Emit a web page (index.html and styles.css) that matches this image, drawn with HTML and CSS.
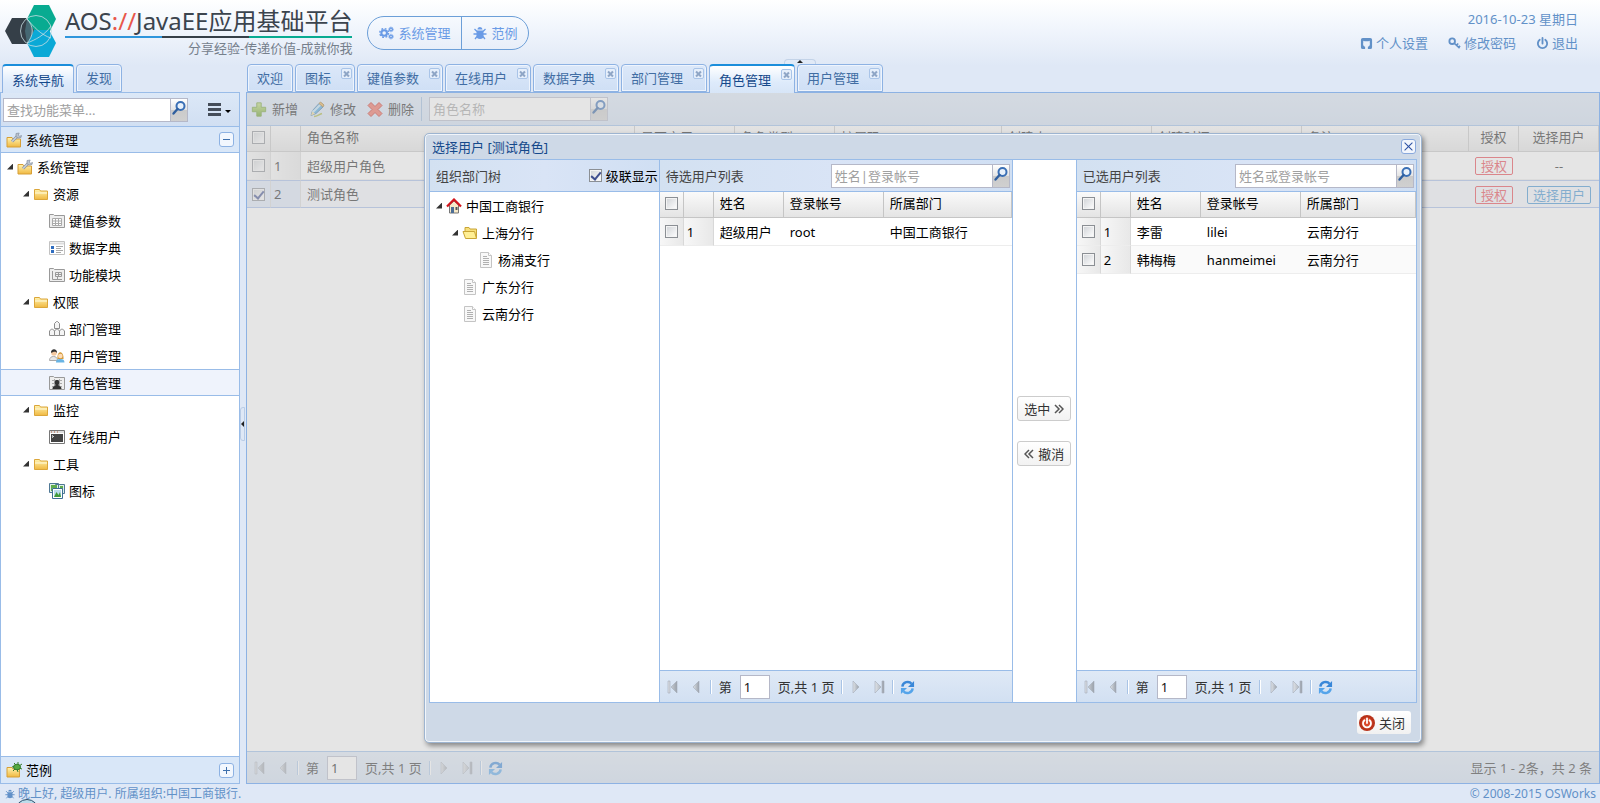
FILE: index.html
```html
<!DOCTYPE html>
<html lang="zh-CN">
<head>
<meta charset="utf-8">
<title>AOS://JavaEE应用基础平台</title>
<link rel="stylesheet" href="styles.css">
</head>
<body>
<svg class="sprite" aria-hidden="true">
  <defs>
    <linearGradient id="gold" x1="0" y1="0" x2="0" y2="1"><stop offset="0" stop-color="#fff3b0"/><stop offset="1" stop-color="#f0b840"/></linearGradient>
    <linearGradient id="leaf" x1="0" y1="0" x2="0" y2="1"><stop offset="0" stop-color="#c4e07c"/><stop offset="1" stop-color="#5f9a1c"/></linearGradient>
    <linearGradient id="silver" x1="0" y1="0" x2="1" y2="0"><stop offset="0" stop-color="#dfe3e8"/><stop offset="1" stop-color="#9aa1aa"/></linearGradient>
  </defs>
  <symbol id="i-search" viewBox="0 0 16 16"><circle cx="9.500" cy="6" r="4" fill="#e8f1fb" stroke="#3a6fb5" stroke-width="2"/><path d="M6.500 9 2.500 13.500" stroke="#2f5f9f" stroke-width="2.400" stroke-linecap="round"/></symbol>
  <symbol id="i-folder" viewBox="0 0 16 16"><path d="M1.500 13.500v-10h5l1 1.500h7v8.500z" fill="url(#gold)" stroke="#dba63a"/><path d="M2 7h12" stroke="#fffbe0"/></symbol>
  <symbol id="i-folder-open" viewBox="0 0 16 16"><path d="M3 11V2.500h4L8 4h6.500v9" fill="#f7df7b" stroke="#c9a536"/><path d="M1 6.500h11.500l2 7H3.500z" fill="#ffef95" stroke="#c9a536"/></symbol>
  <symbol id="i-folder-wrench" viewBox="0 0 16 16"><path d="M1 15V5.500h5L7 7h7.500v8z" fill="url(#gold)" stroke="#d79f36"/><path d="M6 9.500 11.500 4" stroke="#8a94a3" stroke-width="2.800"/><path d="M6 9.500 11.500 4" stroke="#cbd2dc" stroke-width="1.200"/><path d="M10 1.500v3.200L12 6l3-.5.5-2-2 .8L12.300 3l.9-2z" fill="#b9c2ce" stroke="#8590a2" stroke-width=".7"/></symbol>
  <symbol id="i-folder-bug" viewBox="0 0 16 16"><path d="M1 15V5.500h5L7 7h6.500v8z" fill="url(#gold)" stroke="#d79f36"/><path d="m6 5 3-1M8 1l2 2M12 0v3M16 2l-3 2M16 7l-3-1M12 10l-1-3M7 9l2-2" stroke="#347a2a"/><ellipse cx="11" cy="5" rx="3.500" ry="2.800" fill="#55a941" stroke="#347a2a"/></symbol>
  <symbol id="i-grid" viewBox="0 0 16 16"><path d="M.5 14.500v-13h4l1 1h10v12z" fill="#eee" stroke="#999"/><path d="M3.500 5.500h9v7h-9zM3.500 8h9M3.500 10.500h9M6.500 5.500v7M9.500 5.500v7" fill="#fff" stroke="#aaa"/></symbol>
  <symbol id="i-dict" viewBox="0 0 16 16"><path d="M.5 1.500h15v13H.5z" fill="#fff" stroke="#c2c2c2"/><path d="M1 3.500h14" stroke="#ddd" stroke-width="2"/><path d="M2 6h3v3H2zM2 10h3v3H2z" fill="#2f6dc0"/><path d="M7 6.500h7M7 8.500h5M7 10.500h7M7 12.500h5" stroke="#aaa"/></symbol>
  <symbol id="i-module" viewBox="0 0 16 16"><path d="M.5 14.500v-13h4l1 1h10v12z" fill="#eee" stroke="#999"/><path d="M3.500 4v8.500H13M6.500 5.500h6v4h-6zM9.500 5.500v4M6.500 7.500h6M8.500 9.500v3" fill="none" stroke="#999"/></symbol>
  <symbol id="i-org" viewBox="0 0 16 16" ><g fill="#f5f5f5" stroke="#8c8c8c"><path d="M5.500 7.500V2.500l2-2h1l2 2v5zM.5 14.500V10l2-2h1l2 2v4.500zM5.500 14.500V10l2-2h1l2 2v4.500zM10.500 14.500V10l2-2h1l2 2v4.500z"/></g></symbol>
  <symbol id="i-users" viewBox="0 0 16 16"><path d="M.5 12.500c0-3 2-4 4-4s4 1 4 4z" fill="#e8e8e8" stroke="#aaa"/><circle cx="5" cy="5" r="2.800" fill="#f3c8a0"/><path d="M2 5C1.500 0 8.500 0 8 5 6.500 2.800 4 3.800 2 5z" fill="#333"/><path d="M7 14.500c0-3 2-3.500 4.500-3.500s4 1 4 3.500z" fill="#68b4e4"/><path d="M8.500 11c-1-9 6.500-9 6 0z" fill="#d39a3b"/><circle cx="11.300" cy="8" r="2.300" fill="#ffdcb6"/></symbol>
  <symbol id="i-role" viewBox="0 0 16 16"><path d="M.5 14.500v-13h4l1 1h10v12z" fill="#eee" stroke="#999"/><path d="M3 5.500h10M3 8.500h10M3 11.500h10M5.500 4v9M10.500 4v9" stroke="#aaa"/><path d="M3.500 14c0-3 2.500-2.500 3-4C5 7 6 5 8 5s3 2 1.500 5c.5 1.500 3 1 3 4z" fill="#333"/></symbol>
  <symbol id="i-terminal" viewBox="0 0 16 16"><path d="M.5 1.500h15v13H.5z" fill="#fff" stroke="#777"/><path d="M1 3h14" stroke="#ddd" stroke-width="2"/><path d="M2 3h1M5 3h1M8 3h1" stroke="#b25a3a"/><path d="M2 5h12v8H2z" fill="#444"/><path d="m3 6.500 1.500 1L3 8.500" fill="none" stroke="#fff"/></symbol>
  <symbol id="i-pictures" viewBox="0 0 16 16"><g fill="#dff0e8" stroke="#4f7896"><path d="M.5 .5h9v9h-9zM6.500 1.500h9v9h-9z"/></g><path d="M2 2h6v3H2zM11 3h3v6h-3zM2 5h1v3H2z" fill="#5fac4d"/><path d="M3.500 5.500h10v10h-10z" fill="#fff" stroke="#3d6f94"/><path d="M5 7h7v7H5z" fill="#b9dced"/><path d="m5 14 2.500-5 2 3 1.500-3 1 5z" fill="#3f9a3a"/></symbol>
  <symbol id="i-home" viewBox="0 0 16 16"><path d="M3.500 7v8h9V7L8 3z" fill="#f7e9c8" stroke="#777"/><path d="M1 8.500 8 1.500l7 7" fill="none" stroke="#d4151c" stroke-width="2.200"/><path d="M5 9h3v6H5z" fill="#4d6f96"/><path d="M9.500 9h2v3h-2z" fill="#555"/></symbol>
  <symbol id="i-page" viewBox="0 0 16 16"><path d="M2.500.5h8l3 3v12h-11z" fill="#f8f8f8" stroke="#c4c4c4"/><path d="M10.500.5v3h3" fill="#fff" stroke="#c4c4c4"/><path d="M5 4.500h4M5 6.500h6M5 8.500h6M5 10.500h6M5 12.500h6" stroke="#b0b0b0"/></symbol>
  <symbol id="i-add" viewBox="0 0 18 18"><path d="M6.500 1.500h5v5h5v5h-5v5h-5v-5h-5v-5h5z" fill="url(#leaf)" stroke="#6a9b2c"/></symbol>
  <symbol id="i-edit" viewBox="0 0 16 16"><path d="m2 14 1.500-5L10 2l4 3.500L7 12z" fill="#4da7e0" stroke="#3c77a8"/><path d="m3.500 9 1 1 7-7" fill="none" stroke="#bfe3f8" stroke-width="2"/><path d="m10 2 1.500-1.500 3.500 3L14 5.500z" fill="#f2b04c" stroke="#9b7b35"/><path d="m2 14 1.200-4 3 2.300z" fill="#f2d894"/><path d="M5 15c3 0 5-2 8-3" fill="none" stroke="#a8b33a" stroke-width="1.500"/></symbol>
  <symbol id="i-del" viewBox="0 0 16 16"><path d="M1 4 4 1l4 4 4-4 3 3-4 4 4 4-3 3-4-4-4 4-3-3 4-4z" fill="#ee6958" stroke="#c92b20"/></symbol>
  <symbol id="i-first" viewBox="0 0 12 14"><path d="M1 1h2v12H1zM10 1v12L4 7z" fill="url(#silver)" stroke="#a4adb8" stroke-width=".6"/></symbol>
  <symbol id="i-prev" viewBox="0 0 12 14"><path d="M8 1v12L2 7z" fill="url(#silver)" stroke="#a4adb8" stroke-width=".6"/></symbol>
  <symbol id="i-next" viewBox="0 0 12 14"><path d="M4 1v12l6-6z" fill="url(#silver)" stroke="#a4adb8" stroke-width=".6"/></symbol>
  <symbol id="i-last" viewBox="0 0 12 14"><path d="M9 1h2v12H9zM2 1v12l6-6z" fill="url(#silver)" stroke="#a4adb8" stroke-width=".6"/></symbol>
  <symbol id="i-refresh" viewBox="0 0 16 16"><path d="M2.500 7c.5-5 7-6.500 9.800-3" fill="none" stroke="#3987d8" stroke-width="2.600"/><path d="M15 1v6.500H8.500z" fill="#3987d8"/><path d="M13.500 9c-.5 5-7 6.500-9.800 3" fill="none" stroke="#55a4ea" stroke-width="2.600"/><path d="M1 15V8.500h6.500z" fill="#55a4ea"/></symbol>
  <symbol id="i-power" viewBox="0 0 14 14"><path d="M4 3a5 5 0 1 0 6 0M7 1v6" fill="none" stroke="currentColor" stroke-width="2" stroke-linecap="round"/></symbol>
  <symbol id="i-key" viewBox="0 0 14 14"><circle cx="4.500" cy="4.500" r="3" fill="none" stroke="currentColor" stroke-width="2"/><path d="m7 7 5.500 5M9 9l2-2M11 11.500l2-2" stroke="currentColor" stroke-width="1.800"/></symbol>
  <symbol id="i-user" viewBox="0 0 14 14"><path fill="currentColor" fill-rule="evenodd" d="M3 1h8a2 2 0 0 1 2 2v8a2 2 0 0 1-2 2H8.500v-2.500C10.500 10 11 8.500 10.500 6V4L9 4.700H5L3.500 4v2C3 8.500 3.500 10 5.500 10.500V13H3a2 2 0 0 1-2-2V3a2 2 0 0 1 2-2z"/></symbol>
  <symbol id="i-cogs" viewBox="0 0 16 14"><g fill="none" stroke="currentColor"><circle cx="5.500" cy="7" r="3" stroke-width="2.200"/><circle cx="5.500" cy="7" r="4.700" stroke-width="1.500" stroke-dasharray="2 1.700"/><circle cx="12.800" cy="3.200" r="1.500" stroke-width="1.500"/><circle cx="12.800" cy="3.200" r="2.500" stroke-dasharray="1 1"/><circle cx="12.800" cy="10.800" r="1.500" stroke-width="1.500"/><circle cx="12.800" cy="10.800" r="2.500" stroke-dasharray="1 1"/></g></symbol>
  <symbol id="i-bug" viewBox="0 0 14 14"><path d="M4.500 3.500a2.500 2.500 0 0 1 5 0zM3.500 4.500h7V10a3.500 3 0 0 1-7 0z" fill="currentColor"/><path d="m1.500 3 2.500 2.500M12.500 3 10 5.500M.5 8h13M2 13l2.500-3M12 13l-2.500-3" stroke="currentColor" stroke-width="1.300"/></symbol>
</svg>

<header class="top">
  <div class="brand">
    <svg class="logo" viewBox="0 0 52 54" aria-hidden="true">
      <path d="M29 0h15l7 14-7 14H29l-7-14z" fill="#08ab91"/>
      <path d="M29 25h15l7 13-7 14H29l-7-14z" fill="#0aa9d6"/>
      <path d="M7 13h14l8 12-7 14H7L0 26z" fill="#353f48"/>
      <path d="M22 14 29 26l-7 12-2-12z" fill="#4f7b86" opacity=".7"/>
      <g fill="none" stroke="#c8dde2" stroke-width=".8"><circle cx="31" cy="26" r="15.500"/><path d="M22 14c7 7 7 17 0 24M22 38c8-3 18-8 24-17M22 14c7 8 14 16 24 19"/></g>
    </svg>
    <div class="brand-text">
      <h1>AOS<span>://</span>JavaEE应用基础平台</h1>
      <p>分享经验-传递价值-成就你我</p>
    </div>
  </div>
  <nav class="modules">
    <button type="button"><svg class="wide"><use href="#i-cogs"/></svg>系统管理</button>
    <button type="button"><svg><use href="#i-bug"/></svg>范例</button>
  </nav>
  <div class="account">
    <div>2016-10-23 星期日</div>
    <div class="links">
      <a href="#"><svg><use href="#i-user"/></svg>个人设置</a>
      <a href="#"><svg><use href="#i-key"/></svg>修改密码</a>
      <a href="#"><svg><use href="#i-power"/></svg>退出</a>
    </div>
  </div>
  <button type="button" class="fold-top" aria-label="折叠"></button>
</header>

<div class="workspace">
  <aside class="side">
    <div class="tabs side-tabs">
      <button type="button" class="tab active">系统导航</button>
      <button type="button" class="tab">发现</button>
    </div>
    <div class="side-body">
      <div class="toolbar side-tools">
        <span class="search"><input type="text" placeholder="查找功能菜单..." aria-label="查找功能菜单"><button type="button" aria-label="搜索"><svg><use href="#i-search"/></svg></button></span>
        <button type="button" class="menu-btn" aria-label="菜单"><i></i></button>
      </div>
      <div class="acc-head first"><svg class="ic"><use href="#i-folder-wrench"/></svg><span>系统管理</span><button type="button" class="tool minus" aria-label="收起"></button></div>
      <ul class="tree">
        <li><div class="node"><i class="arrow"></i><svg class="ic"><use href="#i-folder-wrench"/></svg>系统管理</div>
          <ul>
            <li><div class="node"><i class="arrow"></i><svg class="ic"><use href="#i-folder"/></svg>资源</div>
              <ul>
                <li><div class="node"><i></i><svg class="ic"><use href="#i-grid"/></svg>键值参数</div></li>
                <li><div class="node"><i></i><svg class="ic"><use href="#i-dict"/></svg>数据字典</div></li>
                <li><div class="node"><i></i><svg class="ic"><use href="#i-module"/></svg>功能模块</div></li>
              </ul></li>
            <li><div class="node"><i class="arrow"></i><svg class="ic"><use href="#i-folder"/></svg>权限</div>
              <ul>
                <li><div class="node"><i></i><svg class="ic"><use href="#i-org"/></svg>部门管理</div></li>
                <li><div class="node"><i></i><svg class="ic"><use href="#i-users"/></svg>用户管理</div></li>
                <li><div class="node selected"><i></i><svg class="ic"><use href="#i-role"/></svg>角色管理</div></li>
              </ul></li>
            <li><div class="node"><i class="arrow"></i><svg class="ic"><use href="#i-folder"/></svg>监控</div>
              <ul>
                <li><div class="node"><i></i><svg class="ic"><use href="#i-terminal"/></svg>在线用户</div></li>
              </ul></li>
            <li><div class="node"><i class="arrow"></i><svg class="ic"><use href="#i-folder"/></svg>工具</div>
              <ul>
                <li><div class="node"><i></i><svg class="ic"><use href="#i-pictures"/></svg>图标</div></li>
              </ul></li>
          </ul></li>
      </ul>
      <div class="acc-head last"><svg class="ic"><use href="#i-folder-bug"/></svg><span>范例</span><button type="button" class="tool plus" aria-label="展开"></button></div>
    </div>
  </aside>
  <div class="splitter"><button type="button" aria-label="折叠导航"></button></div>
  <main class="main">
    <div class="tabs">
      <button type="button" class="tab">欢迎</button>
      <button type="button" class="tab closable">图标<i></i></button>
      <button type="button" class="tab closable">键值参数<i></i></button>
      <button type="button" class="tab closable">在线用户<i></i></button>
      <button type="button" class="tab closable">数据字典<i></i></button>
      <button type="button" class="tab closable">部门管理<i></i></button>
      <button type="button" class="tab closable active">角色管理<i></i></button>
      <button type="button" class="tab closable">用户管理<i></i></button>
    </div>
    <div class="panel">
      <div class="toolbar main-tools">
        <button type="button" class="act"><svg><use href="#i-add"/></svg>新增</button>
        <button type="button" class="act"><svg><use href="#i-edit"/></svg>修改</button>
        <button type="button" class="act"><svg><use href="#i-del"/></svg>删除</button>
        <span class="search"><input type="text" placeholder="角色名称" aria-label="角色名称"><button type="button" aria-label="搜索"><svg><use href="#i-search"/></svg></button></span>
      </div>
      <div class="grid-area">
        <table class="grid roles">
          <colgroup><col class="c-check"><col class="c-num"><col><col class="c-100"><col class="c-100"><col class="c-167"><col class="c-150"><col class="c-150"><col class="c-167"><col class="c-50"><col class="c-80"></colgroup>
          <thead><tr><th><input type="checkbox" aria-label="全选"></th><th></th><th>角色名称</th><th>是否启用</th><th>角色类型</th><th>扩展码</th><th>创建人</th><th>创建时间</th><th>备注</th><th class="mid">授权</th><th class="mid">选择用户</th></tr></thead>
          <tbody>
            <tr><td class="sp"><input type="checkbox" aria-label="选择第1行"></td><td class="sp">1</td><td>超级用户角色</td><td></td><td></td><td></td><td></td><td></td><td></td><td class="mid"><button type="button" class="mini red">授权</button></td><td class="mid">--</td></tr>
            <tr class="picked"><td class="sp"><input type="checkbox" checked aria-label="选择第2行"></td><td class="sp">2</td><td>测试角色</td><td></td><td></td><td></td><td></td><td></td><td></td><td class="mid"><button type="button" class="mini red">授权</button></td><td class="mid"><button type="button" class="mini blue">选择用户</button></td></tr>
          </tbody>
        </table>
      </div>
      <div class="pager">
        <button type="button" aria-label="首页"><svg><use href="#i-first"/></svg></button><button type="button" aria-label="上一页"><svg><use href="#i-prev"/></svg></button><i></i>
        <label>第 <input type="text" value="1"></label><span>页,共 1 页</span><i></i>
        <button type="button" aria-label="下一页"><svg><use href="#i-next"/></svg></button><button type="button" aria-label="末页"><svg><use href="#i-last"/></svg></button><i></i>
        <button type="button" class="reload" aria-label="刷新"><svg><use href="#i-refresh"/></svg></button>
        <span class="info">显示 1 - 2条，共 2 条</span>
      </div>
      <div class="mask">
        <section class="window" role="dialog" aria-label="选择用户">
          <div class="win-head"><h2>选择用户 [测试角色]</h2><button type="button" class="win-close" aria-label="关闭窗口"></button></div>
          <div class="win-body">
            <div class="col depts">
              <div class="toolbar"><span class="cap">组织部门树</span><label class="check"><input type="checkbox" checked>级联显示</label></div>
              <ul class="tree">
                <li><div class="node"><i class="arrow"></i><svg class="ic"><use href="#i-home"/></svg>中国工商银行</div>
                  <ul>
                    <li><div class="node"><i class="arrow"></i><svg class="ic"><use href="#i-folder-open"/></svg>上海分行</div>
                      <ul><li><div class="node"><i></i><svg class="ic"><use href="#i-page"/></svg>杨浦支行</div></li></ul></li>
                    <li><div class="node"><i></i><svg class="ic"><use href="#i-page"/></svg>广东分行</div></li>
                    <li><div class="node"><i></i><svg class="ic"><use href="#i-page"/></svg>云南分行</div></li>
                  </ul></li>
              </ul>
            </div>
            <div class="col source">
              <div class="toolbar"><span class="cap">待选用户列表</span><span class="search"><input type="text" placeholder="姓名|登录帐号" aria-label="姓名|登录帐号"><button type="button" aria-label="搜索"><svg><use href="#i-search"/></svg></button></span></div>
              <div class="grid-area">
                <table class="grid">
                  <colgroup><col class="c-check"><col class="c-num"><col class="c-70"><col class="c-100"><col></colgroup>
                  <thead><tr><th><input type="checkbox" aria-label="全选"></th><th></th><th>姓名</th><th>登录帐号</th><th>所属部门</th></tr></thead>
                  <tbody><tr><td class="sp"><input type="checkbox" aria-label="选择"></td><td class="sp">1</td><td>超级用户</td><td>root</td><td>中国工商银行</td></tr></tbody>
                </table>
              </div>
              <div class="pager">
                <button type="button" aria-label="首页"><svg><use href="#i-first"/></svg></button><button type="button" aria-label="上一页"><svg><use href="#i-prev"/></svg></button><i></i>
                <label>第 <input type="text" value="1"></label><span>页,共 1 页</span><i></i>
                <button type="button" aria-label="下一页"><svg><use href="#i-next"/></svg></button><button type="button" aria-label="末页"><svg><use href="#i-last"/></svg></button><i></i>
                <button type="button" class="reload" aria-label="刷新"><svg><use href="#i-refresh"/></svg></button>
              </div>
            </div>
            <div class="moves">
              <button type="button">选中 <svg viewBox="0 0 10 10"><path d="m1 1 4 4-4 4M5 1l4 4-4 4"/></svg></button>
              <button type="button"><svg viewBox="0 0 10 10"><path d="M5 1 1 5l4 4M9 1 5 5l4 4"/></svg> 撤消</button>
            </div>
            <div class="col target">
              <div class="toolbar"><span class="cap">已选用户列表</span><span class="search"><input type="text" placeholder="姓名或登录帐号" aria-label="姓名或登录帐号"><button type="button" aria-label="搜索"><svg><use href="#i-search"/></svg></button></span></div>
              <div class="grid-area">
                <table class="grid">
                  <colgroup><col class="c-check"><col class="c-num"><col class="c-70"><col class="c-100"><col></colgroup>
                  <thead><tr><th><input type="checkbox" aria-label="全选"></th><th></th><th>姓名</th><th>登录帐号</th><th>所属部门</th></tr></thead>
                  <tbody>
                    <tr><td class="sp"><input type="checkbox" aria-label="选择"></td><td class="sp">1</td><td>李雷</td><td>lilei</td><td>云南分行</td></tr>
                    <tr class="alt"><td class="sp"><input type="checkbox" aria-label="选择"></td><td class="sp">2</td><td>韩梅梅</td><td>hanmeimei</td><td>云南分行</td></tr>
                  </tbody>
                </table>
              </div>
              <div class="pager">
                <button type="button" aria-label="首页"><svg><use href="#i-first"/></svg></button><button type="button" aria-label="上一页"><svg><use href="#i-prev"/></svg></button><i></i>
                <label>第 <input type="text" value="1"></label><span>页,共 1 页</span><i></i>
                <button type="button" aria-label="下一页"><svg><use href="#i-next"/></svg></button><button type="button" aria-label="末页"><svg><use href="#i-last"/></svg></button><i></i>
                <button type="button" class="reload" aria-label="刷新"><svg><use href="#i-refresh"/></svg></button>
              </div>
            </div>
          </div>
          <div class="win-foot"><button type="button"><svg viewBox="0 0 16 16"><circle cx="8" cy="8" r="8" fill="#b8321a"/><circle cx="8" cy="8" r="5.500" fill="#d9492c"/><path d="M5.500 5.200a4 4 0 1 0 5 0M8 3.500V8" fill="none" stroke="#fff" stroke-width="1.800" stroke-linecap="round"/></svg>关闭</button></div>
        </section>
      </div>
    </div>
  </main>
</div>

<footer class="status">
  <span><svg class="bug"><use href="#i-bug"/></svg>晚上好, 超级用户. 所属组织:中国工商银行.</span>
  <span>© 2008-2015 OSWorks</span>
  <i class="bubble"></i>
</footer>
</body>
</html>
```

FILE: styles.css
```css
* { box-sizing: border-box; }

body {
  margin: 0;
  height: 100vh;
  display: flex;
  flex-direction: column;
  overflow: hidden;
  color: #000;
  background: linear-gradient(#fff 0, #f3f7fd 24px, #dfe8f6 66px);
  font: 13px/18px "Noto Sans", "Noto Sans CJK SC", sans-serif;
}

button, input { font: inherit; color: inherit; }
button { margin: 0; padding: 0; border: 0; background: none; }
ul { margin: 0; padding: 0; list-style: none; }
svg { flex: none; }
.sprite { position: absolute; width: 0; height: 0; }
.ic { width: 16px; height: 16px; margin-right: 4px; }

/* header */
.top { position: relative; flex: none; height: 64px; display: flex; align-items: flex-start; padding: 0 22px 0 5px; }
.brand { display: flex; gap: 8px; margin-right: 15px; }
.logo { width: 52px; height: 54px; margin-top: 5px; }
.brand-text { padding-top: 6px; }
.brand h1 {
  margin: 0;
  font-size: 24px;
  line-height: 30px;
  font-weight: 400;
  color: #3b444e;
  white-space: nowrap;
  border-bottom: 2px solid;
  border-image: linear-gradient(90deg, #2f96dc 34%, #353f48 34% 64%, #08ab91 64%) 1;
}
.brand h1 span { color: #e8564a; }
.brand p { margin: 1px 0 0; text-align: right; color: #76808c; }
.modules { display: flex; margin-top: 16px; height: 34px; border: 1px solid #6c9fd8; border-radius: 17px; }
.modules button { display: flex; align-items: center; gap: 4px; padding: 0 11px; color: #6a9be6; }
.modules button + button { border-left: 1px solid #6c9fd8; }
.modules svg { width: 14px; height: 14px; }
.modules .wide { width: 15px; }
.account { margin-left: auto; padding-top: 10px; text-align: right; color: #6291c8; }
.links { display: flex; gap: 20px; margin-top: 6px; }
.links a { display: flex; align-items: center; gap: 3px; color: inherit; text-decoration: none; }
.links svg { width: 13px; height: 13px; }
.fold-top { position: absolute; left: 50%; bottom: 0; width: 32px; height: 5px; margin-left: -16px; border: 1px solid #c3d3e8; border-bottom: 0; border-radius: 4px 4px 0 0; }
.fold-top::after { content: ""; position: absolute; left: 12px; top: 0; border: 3px solid transparent; border-top: 0; border-bottom-color: #222; }

/* tabs */
.workspace { flex: 1; min-height: 0; display: flex; }
.tabs { flex: none; height: 28px; display: flex; gap: 2px; padding-left: 1px; }
.tab {
  position: relative;
  height: 28px;
  padding: 0 9px;
  border: 1px solid #8db2e3;
  border-radius: 4px 4px 0 0;
  color: #416da3;
  background: linear-gradient(#dce8f9, #cfdff5);
  box-shadow: inset 0 0 0 1px #eef4fd;
}
.tab.active { height: 29px; z-index: 1; border-top: 2px solid #1b8edb; border-bottom: 0; color: #15498b; background: linear-gradient(#fff, #deebfb 60%, #d7e5f7); box-shadow: none; }
.side-tabs { padding-left: 2px; gap: 2px; }
.closable { padding-right: 23px; }
.closable i { position: absolute; right: 2px; top: 3px; width: 11px; height: 11px; border: 1px solid #a9c4e8; border-radius: 2px; background: #e6effb; }
.closable i::before, .closable i::after { content: ""; position: absolute; left: 1px; top: 4px; width: 7px; height: 2px; background: #8fa6c6; transform: rotate(45deg); }
.closable i::after { transform: rotate(-45deg); }

/* shared parts */
.toolbar { flex: none; display: flex; align-items: center; height: 33px; border-bottom: 1px solid #99bce8; background: linear-gradient(#dce8f7, #d1dff2); }
.search { display: flex; height: 24px; }
.search input { width: 162px; min-width: 0; padding: 0 3px; border: 1px solid #b5b8c8; background: #fff; outline: 0; }
.search input::placeholder { color: #a0a0a0; opacity: 1; }
.search button { width: 17px; border: 1px solid #b5b8c8; border-left: 0; background: linear-gradient(#fff, #e4e4e4 50%, #cacaca 51%, #d0d0d0); }
.search svg { display: block; width: 16px; height: 16px; margin-top: -4px; }
input[type="checkbox"] { appearance: none; position: relative; display: block; flex: none; width: 13px; height: 13px; margin: 0; border: 1px solid #8b8f94; background: linear-gradient(135deg, #cfd2d6, #fff); box-shadow: inset 0 0 0 1px #f4f4f4; }
input[type="checkbox"]:checked::after { content: ""; position: absolute; left: 3px; top: 0; width: 4px; height: 8px; border: solid #3f4f8f; border-width: 0 2px 2px 0; transform: rotate(40deg); }

/* navigation */
.side { flex: none; width: 240px; display: flex; flex-direction: column; }
.side-body { flex: 1; min-height: 0; display: flex; flex-direction: column; border: 1px solid #99bce8; background: #fff; }
.side-tools { height: 33px; padding-left: 2px; border-bottom: 0; }
.side-tools input { width: 168px; }
.menu-btn { display: flex; align-items: center; gap: 4px; margin-left: 20px; height: 24px; }
.menu-btn::before { content: ""; width: 13px; height: 13px; background: linear-gradient(#454d59 3px, transparent 3px 5px, #454d59 5px 8px, transparent 8px 10px, #454d59 10px); }
.menu-btn i { border: 3px solid transparent; border-top-color: #000; border-bottom: 0; margin-top: 4px; }
.acc-head { flex: none; display: flex; align-items: center; height: 27px; padding: 0 5px; border: solid #99bce8; border-width: 1px 0; background: #d9e7f8; }
.acc-head.last { border-bottom: 0; }
.tool { position: relative; width: 15px; height: 15px; margin-left: auto; border: 1px solid #8db2e3; border-radius: 3px; background: #f2f7fe; }
.tool::before, .plus::after { content: ""; position: absolute; left: 3px; top: 6px; width: 7px; height: 1px; background: #3e70ad; }
.plus::after { transform: rotate(90deg); }
.tree { flex: 1; min-height: 0; }
.node { display: flex; align-items: center; height: 27px; }
.node i { flex: none; width: 16px; height: 6px; }
.arrow::before { content: ""; display: block; width: 6px; height: 6px; margin-left: 6px; background: #333; clip-path: polygon(100% 0, 100% 100%, 0 100%); }
.tree ul .node { padding-left: 16px; }
.tree ul ul .node { padding-left: 32px; }
.node.selected { border: solid #99bce8; border-width: 1px 0; background: #eff3fc; }
.splitter { flex: none; width: 6px; display: flex; align-items: center; }
.splitter button { position: relative; width: 5px; height: 34px; border: 1px solid #b9cce6; border-radius: 3px 0 0 3px; }
.splitter button::after { content: ""; position: absolute; left: 0; top: 13px; border: 3px solid transparent; border-left: 0; border-right-color: #222; }

/* content panel */
.main { flex: 1; min-width: 0; display: flex; flex-direction: column; }
.panel { position: relative; flex: 1; min-height: 0; display: flex; flex-direction: column; border: 1px solid #8db2e3; background: #fff; }
.main-tools { padding-left: 4px; gap: 11px; }
.act { display: flex; align-items: center; gap: 5px; color: #222; }
.act svg { width: 16px; height: 17px; }
.main-tools .search { margin-left: -4px; }
.main-tools .search::before { content: ""; width: 1px; margin-right: 7px; background: #98b8dc; }
.grid-area { flex: 1; min-height: 0; overflow: hidden; }
.grid { width: 100%; table-layout: fixed; border-collapse: separate; border-spacing: 0; }
.grid th { height: 26px; padding: 0 6px 3px; font-weight: 400; text-align: left; border: solid #c5c5c5; border-width: 0 1px 1px 0; background: linear-gradient(#fafafa, #e4e4e4); white-space: nowrap; }
.grid td { height: 28px; padding: 0 6px; border-bottom: 1px solid #ededed; white-space: nowrap; }
.grid th:first-child { padding: 0 5px 3px; }
.grid td:first-child { padding: 0 5px; }
.grid .sp { border-right: 1px solid #d8d8d8; background: linear-gradient(90deg, #f7f7f7, #e8e8e8); }
.grid .sp + .sp { padding: 0 3px; }
.grid td.mid { padding: 0; text-align: center; }
.grid th.mid { padding: 0 0 3px; text-align: center; }
.grid .alt td:not(.sp) { background: #fafafa; }
.c-check { width: 24px; }
.c-num { width: 30px; }
.c-50 { width: 50px; }
.c-70 { width: 70px; }
.c-80 { width: 80px; }
.c-100 { width: 100px; }
.c-150 { width: 150px; }
.c-167 { width: 167px; }
.roles { color: #222; }
.roles .picked td { background: #f3f5fa; border-top: 1px solid #a3bae9; border-bottom-color: #a3bae9; }
.roles .picked .sp { background: #dde6f6; }
.mini { height: 18px; padding: 0 5px; line-height: 16px; border: 1px solid; border-radius: 2px; vertical-align: middle; }
.red { color: #e8404a; }
.blue { color: #3b8fd0; }
.pager { flex: none; display: flex; align-items: center; height: 32px; padding: 0 7px 0 5px; border-top: 1px solid #99bce8; color: #333; background: linear-gradient(#dfe9f6, #d2e0f2); }
.pager button { width: 24px; height: 16px; }
.pager svg { display: block; width: 12px; height: 14px; margin: 1px auto 0 2px; }
.pager > i { width: 1px; height: 14px; margin: 0 8px 0 -3px; background: #a9c4e6; box-shadow: 1px 0 #fff; }
.pager label { display: flex; align-items: center; gap: 8px; }
.pager label input { width: 30px; height: 24px; padding: 0 3px; border: 1px solid #b5b8c8; background: #fff; color: #111; }
.pager > span { margin-left: 8px; margin-right: 10px; white-space: nowrap; }
.pager > span + i { margin-right: 5px; }
.pager .reload svg { width: 15px; height: 15px; margin-left: -1px; }
.pager > .info { margin: 0 0 0 auto; }

/* dialog */
.mask { position: absolute; inset: 0; display: grid; place-items: center; background: rgba(204, 204, 204, 0.5); }
.window { display: flex; flex-direction: column; width: calc(100% - 354px); height: calc(100% - 80px); padding: 0 4px; border: 1px solid #9db4d0; border-radius: 5px; background: #ced9e7; box-shadow: inset 0 0 0 1px #f1f5fa, 2px 3px 5px rgba(0, 0, 0, 0.4); }
.win-head { flex: none; display: flex; align-items: center; height: 25px; padding: 0 1px 0 3px; }
.win-head h2 { margin: 0; font-size: 13px; line-height: 18px; font-weight: 400; color: #15498b; }
.win-close { position: relative; width: 15px; height: 15px; margin-left: auto; border: 1px solid #8aa9dc; border-radius: 3px; background: #f2f6fd; }
.win-close::before, .win-close::after { content: ""; position: absolute; left: 1px; top: 6px; width: 11px; height: 1px; background: #2b4fa2; transform: rotate(45deg); }
.win-close::after { transform: rotate(-45deg); }
.win-body { flex: 1; min-height: 0; display: flex; border: 1px solid #99bce8; background: #fff; }
.win-body .toolbar { height: 32px; padding: 0 2px 0 6px; justify-content: space-between; background: linear-gradient(90deg, #d3e1f1, #d9e4f6 50%, #d0dff3); }
.cap { color: #444; }
.check { display: flex; align-items: center; gap: 4px; }
.col { display: flex; flex-direction: column; min-width: 0; }
.depts { flex: 230 1 0; }
.source { flex: 354 1 0; border: solid #99bce8; border-width: 0 1px; }
.target { flex: 341 1 0; border-left: 1px solid #99bce8; }
.win-body .depts .toolbar { padding-right: 1px; }
.moves { flex: none; width: 63px; display: flex; flex-direction: column; align-items: center; justify-content: center; gap: 20px; }
.moves button { display: flex; align-items: center; gap: 4px; height: 25px; padding: 0 6px; border: 1px solid #ccc; border-radius: 3px; background: linear-gradient(#fff, #f2f2f2); color: #333; white-space: nowrap; }
.moves svg { width: 10px; height: 10px; fill: none; stroke: #555; stroke-width: 1.5; }
.win-foot { flex: none; display: flex; align-items: center; justify-content: flex-end; height: 39px; padding-right: 6px; }
.win-foot button { display: flex; align-items: center; gap: 4px; height: 23px; padding: 0 6px 0 2px; border-radius: 3px; background: linear-gradient(#fff, #f1f1f1); color: #333; }
.win-foot svg { width: 16px; height: 16px; }

/* status bar */
.status { position: relative; flex: none; display: flex; justify-content: space-between; height: 19px; padding: 0 4px 0 5px; font-size: 12px; color: #6291c8; overflow: hidden; }
.status span { display: flex; align-items: center; }
.bug { width: 10px; height: 10px; margin-right: 3px; }
.bubble { position: absolute; left: 15px; top: 15px; width: 24px; height: 24px; border: 1px solid #2b4f6b; border-radius: 50%; background: #bcdcea; }
```
